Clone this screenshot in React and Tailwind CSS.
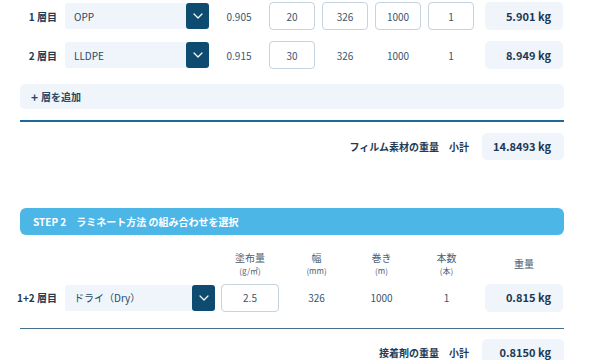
import React from "react";

const font = { fontFamily: '"Noto Sans CJK JP", "Noto Sans", sans-serif' };

function Chevron() {
  return (
    <svg width="10" height="6" viewBox="0 0 10 6" fill="none">
      <path d="M1 1l4 4 4-4" stroke="white" strokeWidth="1.2" strokeLinecap="round" strokeLinejoin="round" />
    </svg>
  );
}

function Select({ value, w }) {
  return (
    <div className={`flex h-[26px] ${w} items-center rounded-[3px] bg-[#eff5fa]`}>
      <div className="flex-1 pl-[9px] text-[10px] text-[#2b4862]">{value}</div>
      <div className="flex h-full w-[23px] items-center justify-center rounded-[3px] bg-[#0d4c70]">
        <Chevron />
      </div>
    </div>
  );
}

function Input({ value, w = "w-[46px]" }) {
  return (
    <div className={`flex h-[28px] ${w} items-center justify-center rounded-[4px] border border-[#c5d3de] bg-white text-[10px] text-[#3c566c]`}>
      {value}
    </div>
  );
}

function Plain({ value }) {
  return <div className="flex h-[28px] w-[46px] items-center justify-center text-[10px] text-[#3c566c]">{value}</div>;
}

function Result({ value, w = "w-[78px]" }) {
  return (
    <div className={`flex h-[28px] ${w} items-center justify-end rounded-[5px] bg-[#eff5fa] pr-[12px] text-[11px] font-bold text-[#1c3853]`}>
      {value}
    </div>
  );
}

function Label({ children }) {
  return (
    <div className="flex w-[37px] justify-end whitespace-nowrap text-[10px] font-bold text-[#1e3a55]">{children}</div>
  );
}

function LayerRow({ label, material, density, thick, inputs, result }) {
  return (
    <div className="flex h-[28px] items-center">
      <Label>{label}</Label>
      <div className="ml-[8px]">
        <Select value={material} w="w-[144px]" />
      </div>
      <div className="w-[60px] text-center text-[10px] text-[#3c566c]">{density}</div>
      <div className="flex gap-[7px]">
        <Input value={thick} />
        {inputs ? (
          <>
            <Input value="326" />
            <Input value="1000" />
            <Input value="1" />
          </>
        ) : (
          <>
            <Plain value="326" />
            <Plain value="1000" />
            <Plain value="1" />
          </>
        )}
      </div>
      <div className="ml-[11px]">
        <Result value={result} />
      </div>
    </div>
  );
}

function Header({ top, bottom }) {
  return (
    <div className="flex flex-col items-center leading-[13px] text-[#4a6072]">
      <div className="text-[10px]">{top}</div>
      <div className="text-[8px]">{bottom}</div>
    </div>
  );
}

export default function App() {
  return (
    <div style={font} className="h-[360px] w-[600px] overflow-hidden bg-white px-[20px] pt-[2px]">
      <div className="w-[544px]">
        <LayerRow label="1 層目" material="OPP" density="0.905" thick="20" inputs result="5.901 kg" />
        <div className="mt-[11px]">
          <LayerRow label="2 層目" material="LLDPE" density="0.915" thick="30" result="8.949 kg" />
        </div>
        <div className="mt-[15px] flex h-[25px] items-center rounded-[5px] bg-[#eff5fa] pl-[11px] text-[10px] font-bold text-[#2a4864]">
          <span className="mr-[3px] text-[12px] font-bold leading-none">+</span>層を追加
        </div>
        <div className="mt-[11px] h-[1.5px] bg-[#1b6a9a]" />
        <div className="mt-[11px] flex items-center justify-end">
          <div className="mr-[13px] text-[10px] font-bold text-[#1e3a55]">フィルム素材の重量　小計</div>
          <div className="flex h-[27px] w-[82px] items-center justify-end rounded-[5px] bg-[#eff5fa] pr-[13px] text-[11px] font-bold text-[#1c3853]">
            14.8493 kg
          </div>
        </div>

        <div className="mt-[48px] flex h-[27px] items-center rounded-[6px] bg-[#4cb6e7] pl-[13px] text-[10px] font-bold text-white">
          STEP 2　ラミネート方法 の組み合わせを選択
        </div>

        <div className="mt-[16px] flex items-center">
          <div className="w-[201px]" />
          <div className="w-[58px]">
            <Header top="塗布量" bottom="(g/㎡)" />
          </div>
          <div className="w-[5px]" />
          <div className="w-[65px]"><Header top="幅" bottom="(mm)" /></div>
          <div className="w-[65px]"><Header top="巻き" bottom="(m)" /></div>
          <div className="w-[65px]"><Header top="本数" bottom="(本)" /></div>
          <div className="ml-[6px] w-[78px] text-center text-[10px] text-[#4a6072]">重量</div>
        </div>

        <div className="mt-[7px] flex h-[28px] items-center">
          <Label>1+2 層目</Label>
          <div className="ml-[8px]">
            <Select value="ドライ（Dry）" w="w-[150px]" />
          </div>
          <div className="ml-[6px]">
            <Input value="2.5" w="w-[58px]" />
          </div>
          <div className="w-[5px]" />
          <div className="w-[65px] text-center text-[10px] text-[#3c566c]">326</div>
          <div className="w-[65px] text-center text-[10px] text-[#3c566c]">1000</div>
          <div className="w-[65px] text-center text-[10px] text-[#3c566c]">1</div>
          <div className="ml-[6px]">
            <Result value="0.815 kg" />
          </div>
        </div>
        <div className="mt-[16px] h-[1.5px] bg-[#44708c]" />
        <div className="mt-[10px] flex items-start justify-end">
          <div className="mr-[13px] mt-[6px] text-[10px] font-bold text-[#1e3a55]">接着剤の重量　小計</div>
          <div className="flex h-[27px] w-[82px] items-center justify-end rounded-[5px] bg-[#eff5fa] pr-[13px] text-[11px] font-bold text-[#1c3853]">
            0.8150 kg
          </div>
        </div>
      </div>
    </div>
  );
}
